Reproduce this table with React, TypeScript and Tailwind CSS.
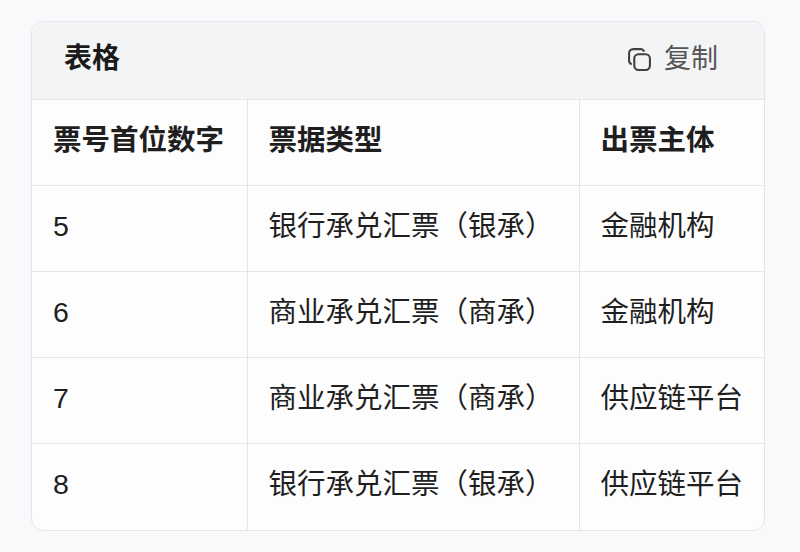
import React from "react";

const rows = [
  { num: "5", type: "银行承兑汇票（银承）", issuer: "金融机构" },
  { num: "6", type: "商业承兑汇票（商承）", issuer: "金融机构" },
  { num: "7", type: "商业承兑汇票（商承）", issuer: "供应链平台" },
  { num: "8", type: "银行承兑汇票（银承）", issuer: "供应链平台" },
];

function CopyIcon() {
  return (
    <svg width="25" height="25" viewBox="0 0 24 24" fill="none" stroke="#3f3f3f" strokeWidth="2" strokeLinejoin="round">
      <rect x="7" y="7" width="15" height="15" rx="4" />
      <path d="M16.5 4.5A4 4 0 0 0 13 2H6a4 4 0 0 0-4 4v7a4 4 0 0 0 2.5 3.7" />
    </svg>
  );
}

export default function App() {
  return (
    <div
      className="w-[800px] h-[552px] bg-[#f8f9fa] pt-[21px] pl-[31px]"
      style={{ fontFamily: '"Liberation Sans", "Noto Sans CJK SC", sans-serif' }}
    >
      <div className="w-[734px] border border-[#e3e5e8] rounded-[12px] overflow-hidden bg-[#fdfdfe]">
        {/* 标题栏 */}
        <div className="h-[77px] bg-[#f3f4f6] flex items-center justify-between pl-[32px] pr-[46px] pb-[3px]">
          <span className="text-[28px] font-bold text-[#1a1a1a]">表格</span>
          <div className="flex items-center gap-[12px] text-[#555]">
            <CopyIcon />
            <span className="text-[27px]">复制</span>
          </div>
        </div>

        <table className="w-full border-collapse text-[28.5px] text-[#1f1f1f]">
          <colgroup>
            <col className="w-[215px]" />
            <col className="w-[332px]" />
            <col />
          </colgroup>
          <thead>
            <tr className="h-[86px] border-t border-[#e3e5e8]">
              <th className="text-left font-bold pl-[21px] pb-[5px] border-r border-[#e3e5e8]">票号首位数字</th>
              <th className="text-left font-bold pl-[21px] pb-[5px] border-r border-[#e3e5e8]">票据类型</th>
              <th className="text-left font-bold pl-[21px] pb-[5px]">出票主体</th>
            </tr>
          </thead>
          <tbody>
            {rows.map((r, i) => (
              <tr key={i} className="h-[86px] border-t border-[#e3e5e8]">
                <td className="pl-[21px] pb-[5px] border-r border-[#e3e5e8]">{r.num}</td>
                <td className="pl-[21px] pb-[5px] border-r border-[#e3e5e8]">{r.type}</td>
                <td className="pl-[21px] pb-[5px]">{r.issuer}</td>
              </tr>
            ))}
          </tbody>
        </table>
      </div>
    </div>
  );
}
